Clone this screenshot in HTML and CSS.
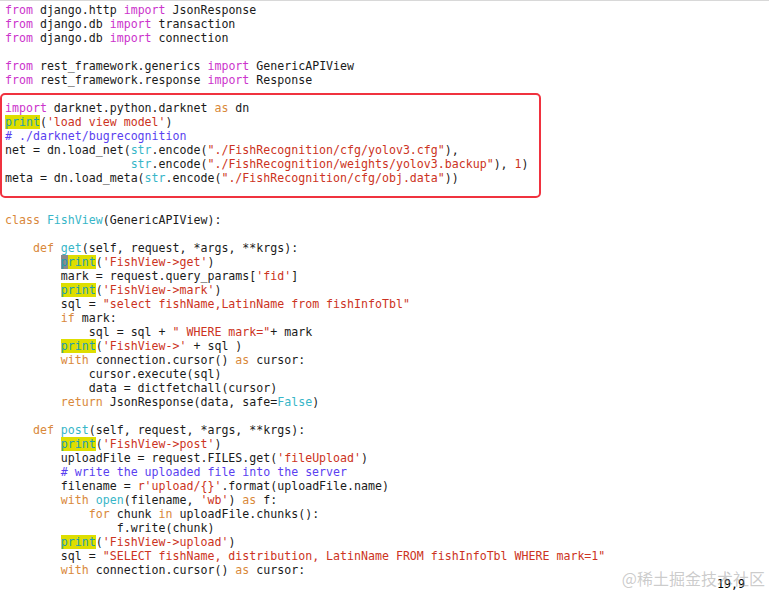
FILE: index.html
```html
<!DOCTYPE html>
<html>
<head>
<meta charset="utf-8">
<link rel="stylesheet" href="styles.css">
</head>
<body>
<div class="editor">
<pre class="code"><span class="kw">from</span> django.http <span class="kw">import</span> JsonResponse
<span class="kw">from</span> django.db <span class="kw">import</span> transaction
<span class="kw">from</span> django.db <span class="kw">import</span> connection

<span class="kw">from</span> rest_framework.generics <span class="kw">import</span> GenericAPIView
<span class="kw">from</span> rest_framework.response <span class="kw">import</span> Response

<span class="kw">import</span> darknet.python.darknet <span class="ok">as</span> dn
<span class="pr">print</span>(<span class="st">'load view model'</span>)
<span class="cm"># ./darknet/bugrecognition</span>
net = dn.load_net(<span class="fn">str</span>.encode(<span class="st">"./FishRecognition/cfg/yolov3.cfg"</span>),
                  <span class="fn">str</span>.encode(<span class="st">"./FishRecognition/weights/yolov3.backup"</span>), <span class="st">1</span>)
meta = dn.load_meta(<span class="fn">str</span>.encode(<span class="st">"./FishRecognition/cfg/obj.data"</span>))


<span class="ok">class</span> <span class="fn">FishView</span>(GenericAPIView):

    <span class="ok">def</span> <span class="fn">get</span>(self, request, *args, **krgs):
        <span class="pr"><span class="cur">p</span>rint</span>(<span class="st">'FishView-&gt;get'</span>)
        mark = request.query_params[<span class="st">'fid'</span>]
        <span class="pr">print</span>(<span class="st">'FishView-&gt;mark'</span>)
        sql = <span class="st">"select fishName,LatinName from fishInfoTbl"</span>
        <span class="ok">if</span> mark:
            sql = sql + <span class="st">" WHERE mark="</span>+ mark
        <span class="pr">print</span>(<span class="st">'FishView-&gt;'</span> + sql )
        <span class="ok">with</span> connection.cursor() <span class="ok">as</span> cursor:
            cursor.execute(sql)
            data = dictfetchall(cursor)
        <span class="ok">return</span> JsonResponse(data, safe=<span class="fn">False</span>)

    <span class="ok">def</span> <span class="fn">post</span>(self, request, *args, **krgs):
        <span class="pr">print</span>(<span class="st">'FishView-&gt;post'</span>)
        uploadFile = request.FILES.get(<span class="st">'fileUpload'</span>)
        <span class="cm"># write the uploaded file into the server</span>
        filename = <span class="st">r'upload/{}'</span>.format(uploadFile.name)
        <span class="ok">with</span> <span class="fn">open</span>(filename, <span class="st">'wb'</span>) <span class="ok">as</span> f:
            <span class="ok">for</span> chunk <span class="ok">in</span> uploadFile.chunks():
                f.write(chunk)
        <span class="pr">print</span>(<span class="st">'FishView-&gt;upload'</span>)
        sql = <span class="st">"SELECT fishName, distribution, LatinName FROM fishInfoTbl WHERE mark=1"</span>
        <span class="ok">with</span> connection.cursor() <span class="ok">as</span> cursor:</pre>
<div class="status"><span class="pos">19,9</span></div>
<div class="mark-box"></div>
<div class="watermark">@稀土掘金技术社区</div>
</div>
</body>
</html>
```
FILE: styles.css
```css
html, body {
  margin: 0;
  padding: 0;
  background: #ffffff;
}
.editor {
  position: relative;
  width: 769px;
  height: 593px;
  overflow: hidden;
  border-top: 1px solid #d8d8d8;
  box-sizing: border-box;
}
.code {
  margin: 0;
  padding: 2px 0 0 5px;
  font-family: "DejaVu Sans Mono", "Liberation Mono", monospace;
  font-size: 11.6px;
  line-height: 14px;
  color: #1a1a1a;
}
.kw { color: #cc33cc; }
.ok { color: #d9883a; }
.st { color: #cc3322; }
.cm { color: #5a3ff0; }
.fn { color: #38b6c8; }
.pr { color: #1e9db0; background: #dede00; }
.cur { background: #8a8a8a; }
.status {
  display: flex;
  justify-content: flex-end;
  padding-right: 24px;
  font-family: "DejaVu Sans Mono", monospace;
  font-size: 11.6px;
  line-height: 14px;
  color: #000;
}
.mark-box {
  position: absolute;
  left: 0;
  top: 92px;
  width: 537px;
  height: 101px;
  border: 2px solid #f0323f;
  border-radius: 5px;
}
.watermark {
  position: absolute;
  right: 4px;
  bottom: 6px;
  font-family: "Noto Sans CJK SC", sans-serif;
  font-size: 16px;
  line-height: 18px;
  color: rgba(160, 160, 160, 0.55);
}
```
